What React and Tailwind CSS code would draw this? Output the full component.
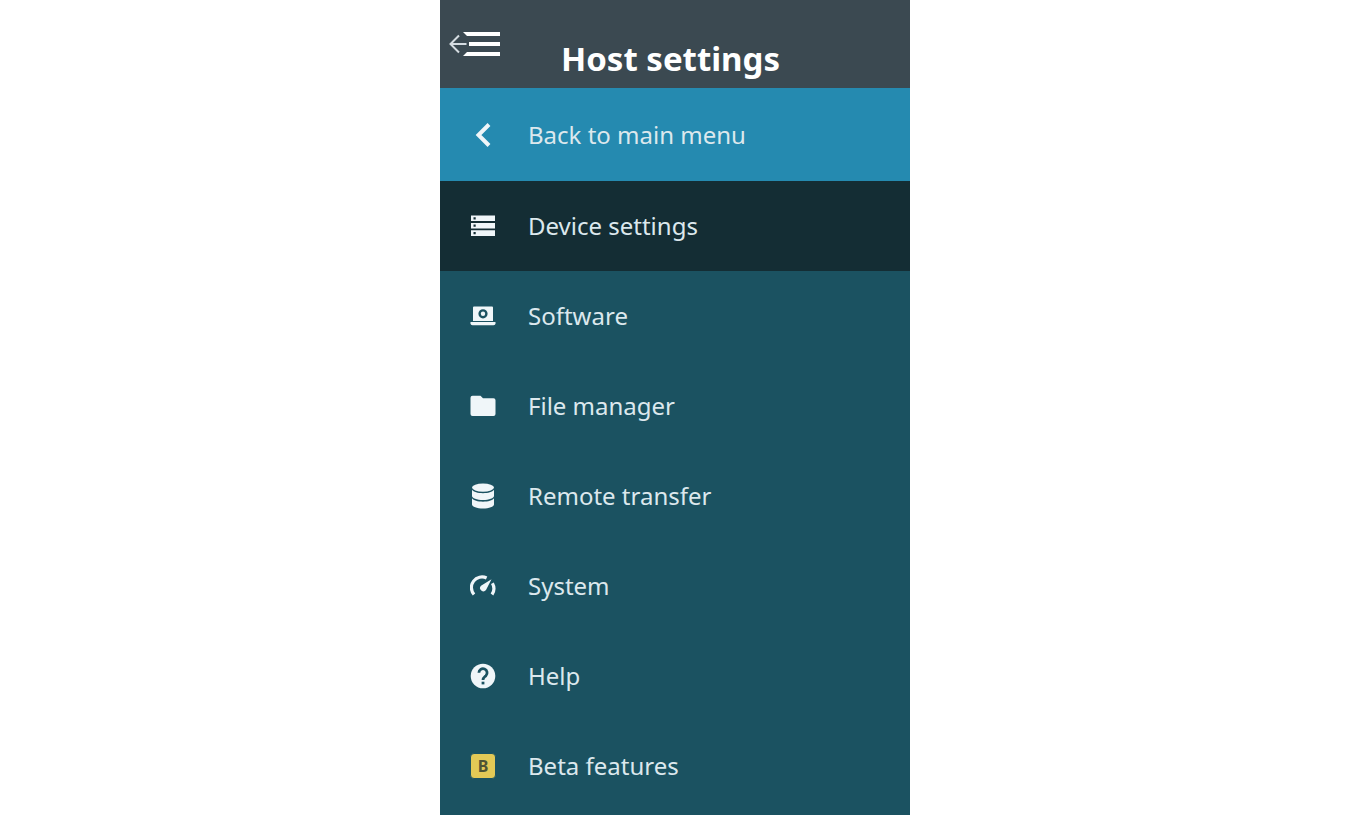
import React from "react";

function Icon({ children }) {
  return (
    <svg viewBox="0 0 26 26" className="size-[26px] shrink-0 fill-current text-[#f0f6f9]" aria-hidden="true">
      {children}
    </svg>
  );
}

const ChevronIcon = () => (
  <Icon>
    <path d="M19 2.500 8.500 13 19 23.500" fill="none" stroke="currentColor" strokeWidth="4" />
  </Icon>
);

const ServerIcon = () => (
  <Icon>
    <path
      fillRule="evenodd"
      d="M1 2.500h24v5.600H1zM3.500 4.200v2.200h2.200V4.200zM1 9.900h24v5.600H1zM3.500 11.600v2.200h2.200v-2.200zM1 17.300h24v5.600H1zM3.500 19v2.200h2.200V19z"
    />
  </Icon>
);

const SoftwareIcon = () => (
  <Icon>
    <path
      fillRule="evenodd"
      d="M4 3.500h18a1 1 0 0 1 1 1V18H3V4.500a1 1 0 0 1 1-1zM13 6.200a4.600 4.600 0 1 0 0 9.200 4.600 4.600 0 0 0 0-9.200z"
    />
    <circle cx="13" cy="10.800" r="2.200" />
    <path d="M0.500 19h25v1.200a2 2 0 0 1-2 2h-21a2 2 0 0 1-2-2z" />
  </Icon>
);

const FolderIcon = () => (
  <Icon>
    <path d="M2.500 2.800h8L13 5.300h10.500a2 2 0 0 1 2 2V21a2 2 0 0 1-2 2h-21a2 2 0 0 1-2-2V4.800a2 2 0 0 1 2-2z" />
  </Icon>
);

const DatabaseIcon = () => (
  <Icon>
    <ellipse cx="13" cy="4.600" rx="11" ry="4.100" />
    <path d="M2 6.800c1.500 2.200 5.800 3.400 11 3.400s9.500-1.200 11-3.400v6.200c0 2.300-4.900 4-11 4s-11-1.700-11-4z" />
    <path d="M2 15.300c1.500 2.200 5.800 3.400 11 3.400s9.500-1.200 11-3.400v6.200c0 2.300-4.900 4-11 4s-11-1.700-11-4z" />
  </Icon>
);

const GaugeIcon = () => (
  <Icon>
    <path
      d="M4 21A10.600 10.600 0 0 1 16.600 4.500M22.400 9.800A10.600 10.600 0 0 1 22 21"
      fill="none"
      stroke="currentColor"
      strokeWidth="3.200"
      transform="translate(0 .5)"
    />
    <path d="M21.500 6.300 16 17a3.300 3.300 0 1 1-5-4.300z" />
  </Icon>
);

const HelpIcon = () => (
  <Icon>
    <circle cx="13" cy="13" r="12.300" />
    <g className="text-[#1b5261]">
      <path
        d="M8.900 9.800a4.100 4.100 0 1 1 7 2.900c-1.600 1.500-2.900 2-2.900 4.300"
        fill="none"
        stroke="currentColor"
        strokeWidth="2.800"
      />
      <path d="M11.600 18.700h2.800v2.700h-2.800z" fill="currentColor" />
    </g>
  </Icon>
);

const BetaIcon = () => (
  <span
    aria-hidden="true"
    className="flex size-[26px] shrink-0 items-center justify-center rounded-sm border border-[#1b5261] bg-[#e3c956] text-base font-bold text-[#4d5435]"
  >
    B
  </span>
);

const items = [
  { label: "Device settings", icon: ServerIcon, active: true },
  { label: "Software", icon: SoftwareIcon },
  { label: "File manager", icon: FolderIcon },
  { label: "Remote transfer", icon: DatabaseIcon },
  { label: "System", icon: GaugeIcon },
  { label: "Help", icon: HelpIcon },
  { label: "Beta features", icon: BetaIcon },
];

export default function App() {
  return (
    <div className="min-h-screen bg-white font-['Noto_Sans',sans-serif]">
      <aside className="mx-auto min-h-screen w-full max-w-[470px] bg-[#1b5261] text-[#dce8ed]">
        <header className="flex h-[88px] items-start gap-[60px] bg-[#3b4951] pl-[9px] text-white">
          <button type="button" aria-label="Collapse menu" className="mt-[31px] shrink-0">
            <svg viewBox="0 0 52 26" className="h-[26px] w-[52px]" aria-hidden="true">
              <path d="M14 1h37v4H18zM20 11h31v4H20zM18 21h33v4H14z" fill="currentColor" />
              <path d="M17.500 13H1.500M10 4.500 1.500 13l8.500 8.500" fill="none" stroke="#d5dce1" strokeWidth="2" />
            </svg>
          </button>
          <h1 className="pt-[39px] text-[33px] leading-10 font-bold whitespace-nowrap">Host settings</h1>
        </header>
        <nav>
          <a href="#main" className="flex h-[93px] items-center gap-8 bg-[#258ab0] px-[30px] text-2xl">
            <ChevronIcon />
            Back to main menu
          </a>
          <ul>
            {items.map(({ label, icon: ItemIcon, active }) => (
              <li key={label}>
                <a
                  href="#settings"
                  aria-current={active ? "page" : undefined}
                  className={`flex h-[90px] items-center gap-8 px-[30px] text-2xl ${active ? "bg-[#142d34]" : ""}`}
                >
                  <ItemIcon />
                  {label}
                </a>
              </li>
            ))}
          </ul>
        </nav>
      </aside>
    </div>
  );
}
